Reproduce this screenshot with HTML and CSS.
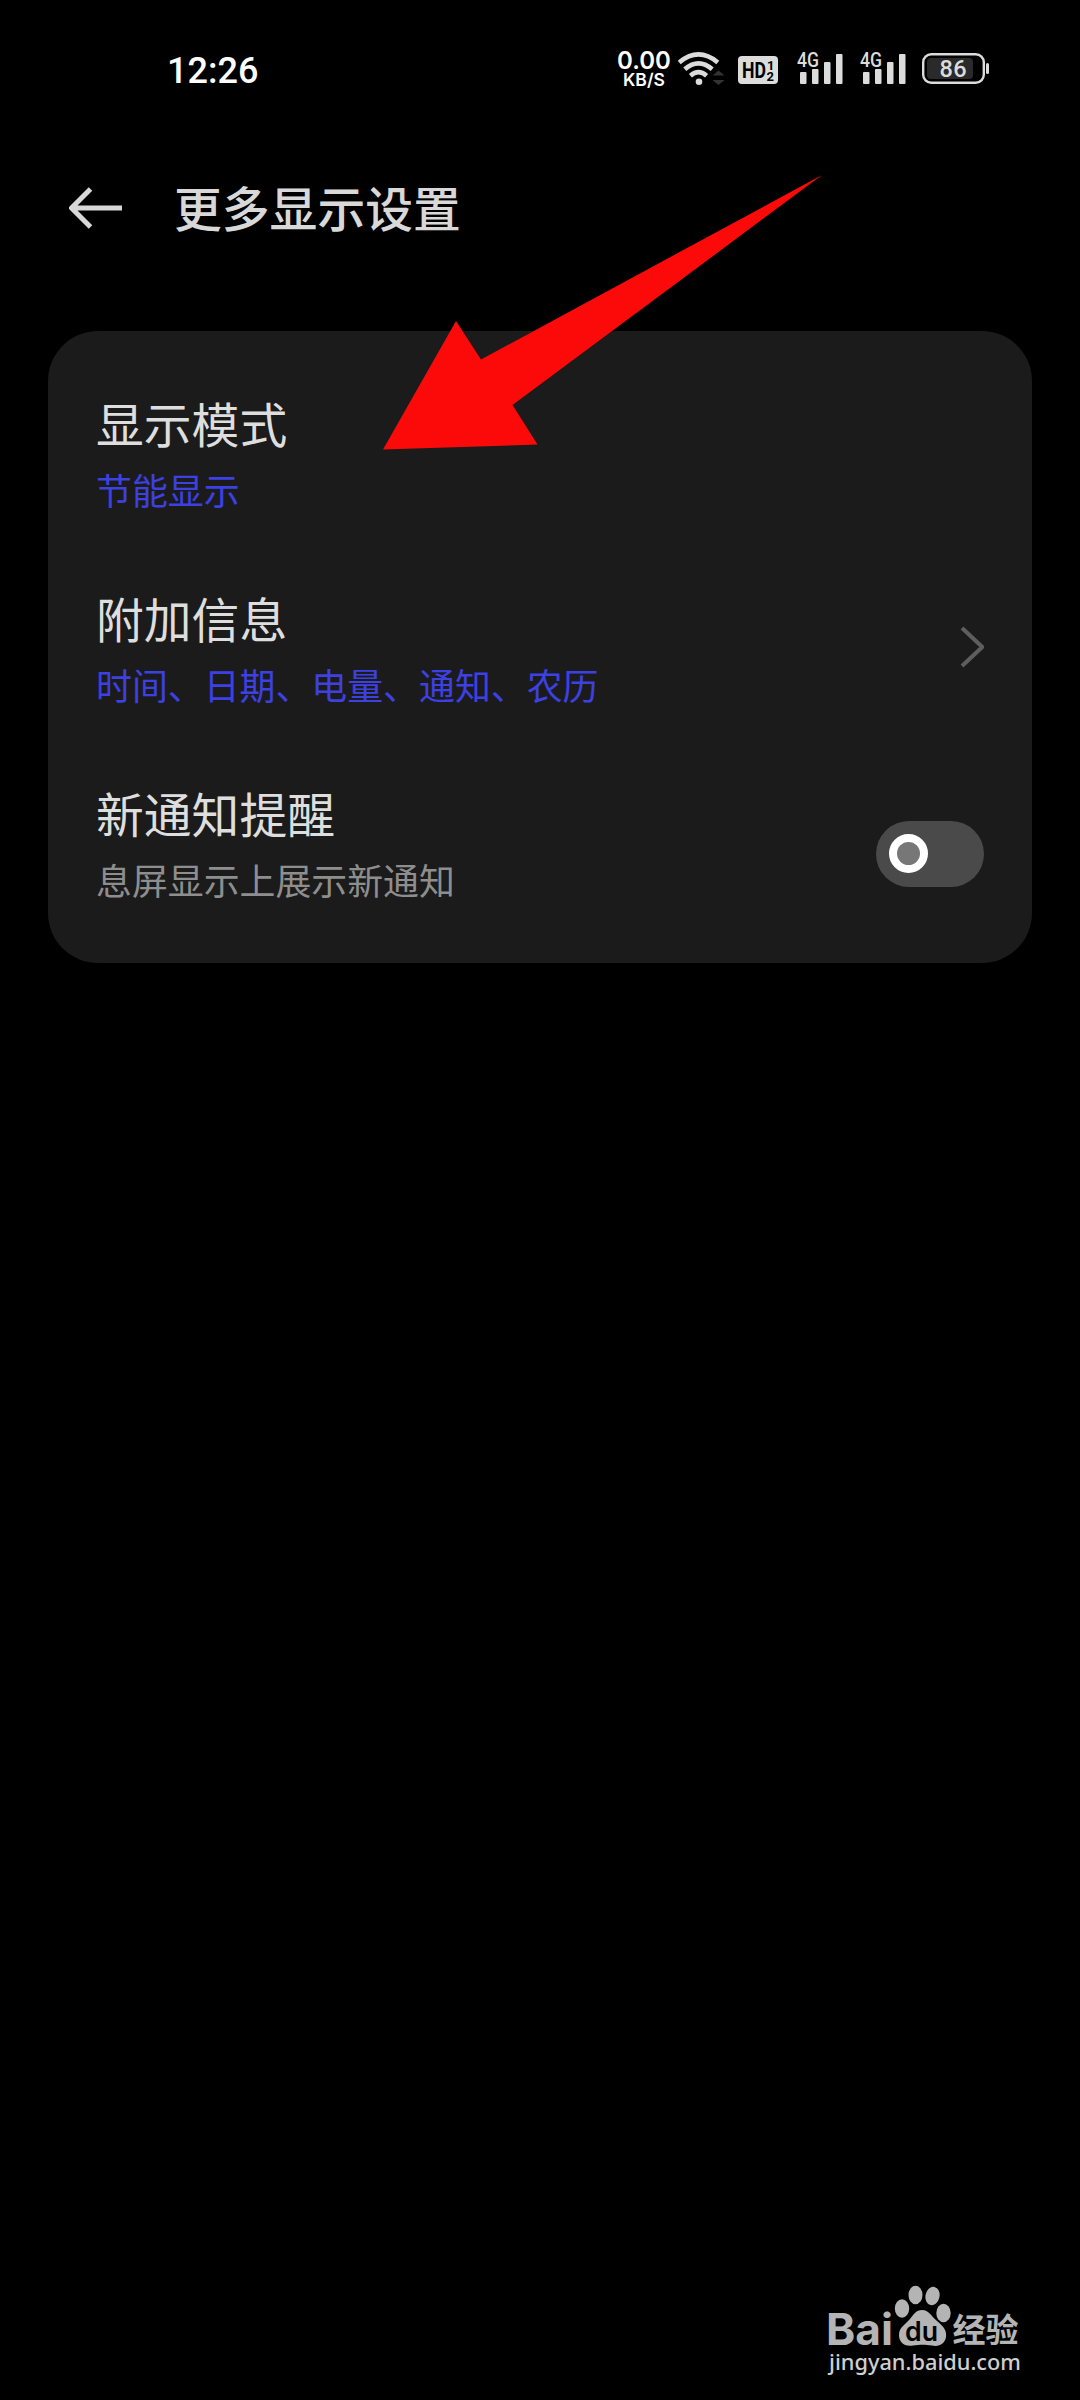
FILE: index.html
```html
<!DOCTYPE html>
<html lang="zh-CN">
<head>
<meta charset="utf-8">
<title>更多显示设置</title>
<link rel="stylesheet" href="styles.css">
</head>
<body>
<div class="screen">
  <header class="status">
    <div class="clock">12:26</div>
    <div class="status-icons">
      <div class="speed"><span class="speed-value">0.00</span><span class="speed-unit">KB/S</span></div>
      <svg class="wifi" width="48" height="40" viewBox="0 0 48 40">
        <g fill="none" stroke="#dcdcdc" stroke-width="4.6">
          <path d="M1.200 12.400Q20.500 -3.600 39.800 12.400"/>
          <path d="M6.800 19.200Q20.500 7.600 34.200 19.200"/>
          <path d="M12.400 25.700Q20.500 18.700 28.600 25.700"/>
        </g>
        <circle cx="21" cy="31.800" r="3.300" fill="#dcdcdc"/>
        <path d="M34.500 25.500L40.500 20.500L46.500 25.500ZM34.500 30L40.500 35L46.500 30Z" fill="#333"/>
      </svg>
      <svg class="hd" width="40" height="28" viewBox="0 0 40 28">
        <rect width="40" height="28" rx="4" fill="#dcdcdc"/>
        <g fill="#000" font-family="Roboto, sans-serif" font-weight="700">
          <text x="4" y="22" font-size="22" textLength="24" lengthAdjust="spacingAndGlyphs">HD</text>
          <text x="29" y="13.500" font-size="13">1</text>
          <text x="28.500" y="24.500" font-size="13">2</text>
        </g>
      </svg>
      <svg class="signal" width="46" height="42" viewBox="0 -8 46 42">
        <text x="0" y="16" font-family="Roboto, sans-serif" font-weight="500" font-size="20.500" fill="#dcdcdc" textLength="22" lengthAdjust="spacingAndGlyphs">4G</text>
        <g fill="#dcdcdc"><rect x="3" y="21" width="6.500" height="12" rx="1"/><rect x="15" y="18" width="6.500" height="15" rx="1"/><rect x="27" y="11" width="6.500" height="22" rx="1"/><rect x="39" y="3" width="6.500" height="30" rx="1"/></g>
      </svg>
      <svg class="signal signal-two" width="46" height="42" viewBox="0 -8 46 42">
        <text x="0" y="16" font-family="Roboto, sans-serif" font-weight="500" font-size="20.500" fill="#dcdcdc" textLength="22" lengthAdjust="spacingAndGlyphs">4G</text>
        <g fill="#dcdcdc"><rect x="3" y="21" width="6.500" height="12" rx="1"/><rect x="15" y="18" width="6.500" height="15" rx="1"/><rect x="27" y="11" width="6.500" height="22" rx="1"/><rect x="39" y="3" width="6.500" height="30" rx="1"/></g>
      </svg>
      <svg class="battery" width="67" height="31" viewBox="0 0 67 31">
        <rect x="1.200" y="1.200" width="60.600" height="28.600" rx="8" fill="none" stroke="#dcdcdc" stroke-width="2.400"/>
        <rect x="5" y="5" width="46" height="21" rx="4" fill="#2a2a2a"/>
        <rect x="64" y="10" width="3" height="11" rx="1.500" fill="#dcdcdc"/>
        <text x="17.500" y="23.500" font-family="Roboto, sans-serif" font-weight="500" font-size="23.500" fill="#dcdcdc" textLength="27">86</text>
      </svg>
    </div>
  </header>

  <nav class="titlebar">
    <svg class="back" width="54" height="42" viewBox="0 0 54 42">
      <path d="M53 21H3M21.500 2L2.500 21L21.500 40" fill="none" stroke="#d8d8d8" stroke-width="5" stroke-linejoin="round"/>
    </svg>
    <h1 class="heading">更多显示设置</h1>
  </nav>

  <main class="card">
    <section class="row">
      <div class="labels">
        <div class="name">显示模式</div>
        <div class="detail accent">节能显示</div>
      </div>
    </section>
    <section class="row">
      <div class="labels">
        <div class="name">附加信息</div>
        <div class="detail accent">时间、日期、电量、通知、农历</div>
      </div>
      <svg class="chevron" width="24" height="42" viewBox="0 0 24 42">
        <path d="M2 2L22.300 21L2 40" fill="none" stroke="#5e5e5e" stroke-width="4" stroke-linejoin="round"/>
      </svg>
    </section>
    <section class="row">
      <div class="labels">
        <div class="name">新通知提醒</div>
        <div class="detail">息屏显示上展示新通知</div>
      </div>
      <div class="toggle"><span class="knob"></span></div>
    </section>
  </main>

  <footer class="brand">
    <svg width="200" height="100" viewBox="0 0 200 100">
      <g fill="#b4b4b4">
        <text x="-1" y="64.500" font-family="Inter, sans-serif" font-weight="700" font-size="44" textLength="67" lengthAdjust="spacingAndGlyphs">Bai</text>
        <ellipse cx="75" cy="28.500" rx="7.200" ry="9.200"/>
        <ellipse cx="88.500" cy="15" rx="7" ry="9.300"/>
        <ellipse cx="105.500" cy="16" rx="7" ry="9.300" transform="rotate(12 105.500 16)"/>
        <ellipse cx="116.500" cy="33" rx="7.200" ry="9.200"/>
        <path d="M95 30C102 30 104 36 110 41C116 46 120 50 119 57C118 64 112 67 105 65.500C98 64.500 93 64.500 86 65.500C77 67 72 62 72 55C72 47 79 44 83 39C87 34 89 30 95 30Z"/>
        <text x="125.500" y="62" font-family="'Noto Sans CJK SC', sans-serif" font-weight="700" font-size="33" textLength="66" lengthAdjust="spacingAndGlyphs">经验</text>
      </g>
      <text x="78" y="60.500" font-family="Inter, sans-serif" font-weight="600" font-size="27" fill="#000" textLength="33" lengthAdjust="spacingAndGlyphs">du</text>
      <text x="2" y="90" font-family="'Noto Sans', sans-serif" font-size="21.500" font-weight="500" fill="#cfcfcf" textLength="192" lengthAdjust="spacingAndGlyphs">jingyan.baidu.com</text>
    </svg>
  </footer>

  <svg class="pointer" width="440" height="276" viewBox="0 0 440 276">
    <path d="M0 274.500L73 146L98 184.500L439 0L129.500 230L154.500 269.500Z" fill="#fc0a0a"/>
  </svg>
</div>
</body>
</html>
```

FILE: styles.css
```css
* { box-sizing: border-box; }

body {
  margin: 0;
  background: #000;
  font-family: Roboto, "Noto Sans CJK SC", sans-serif;
}

.screen {
  position: relative;
  display: flex;
  flex-direction: column;
  width: 1080px;
  height: 2400px;
  overflow: hidden;
}

.status {
  display: flex;
  justify-content: space-between;
  align-items: center;
  height: 140px;
  padding: 0 91px 0 167px;
}

.clock {
  margin-top: 2px;
  color: #fff;
  font-size: 36px;
  font-weight: 500;
  line-height: 42px;
}

.status-icons {
  display: flex;
  align-items: center;
  height: 40px;
}

.speed {
  display: flex;
  flex-direction: column;
  align-items: center;
  width: 54px;
  margin: 0 7px 2px 0;
  color: #fff;
  font-family: Inter, sans-serif;
  font-weight: 600;
}

.speed-value { font-size: 24px; line-height: 21px; }
.speed-unit { font-size: 17.5px; line-height: 17px; }

.wifi { margin-right: 12px; }
.hd { margin-right: 19px; }
.signal { margin: 0 17px 12px 0; }
.signal-two { margin-right: 16px; }
.battery { margin-bottom: 3px; }

.titlebar {
  display: flex;
  align-items: center;
  height: 136px;
  padding-left: 69px;
}

.heading {
  margin: 6px 0 0 51px;
  color: #d8d8d8;
  font-size: 47.8px;
  font-weight: 500;
  line-height: 70px;
}

.card {
  width: 984px;
  height: 632px;
  margin: 55px 0 0 48px;
  padding: 28px 48px 0;
  border-radius: 50px;
  background: #1b1b1b;
}

.row {
  display: flex;
  justify-content: space-between;
  align-items: center;
  height: 195px;
}

.labels { margin-top: 2px; }

.name {
  color: #dedede;
  font-size: 47.8px;
  line-height: 70px;
}

.detail {
  color: #8e8e8e;
  font-size: 35.9px;
  line-height: 62px;
}

.accent { color: #3d41e2; }

.chevron { margin-bottom: 10px; }

.toggle {
  display: flex;
  align-items: center;
  width: 108px;
  height: 66px;
  margin-top: 14px;
  padding-left: 13px;
  border-radius: 33px;
  background: #4a4a4a;
}

.knob {
  width: 39px;
  height: 39px;
  border: 8px solid #fff;
  border-radius: 50%;
  background: #777;
}

.brand {
  height: 100px;
  margin: auto 53px 20px auto;
}

.brand svg { display: block; }

.pointer {
  position: absolute;
  left: 383px;
  top: 175px;
}
```
